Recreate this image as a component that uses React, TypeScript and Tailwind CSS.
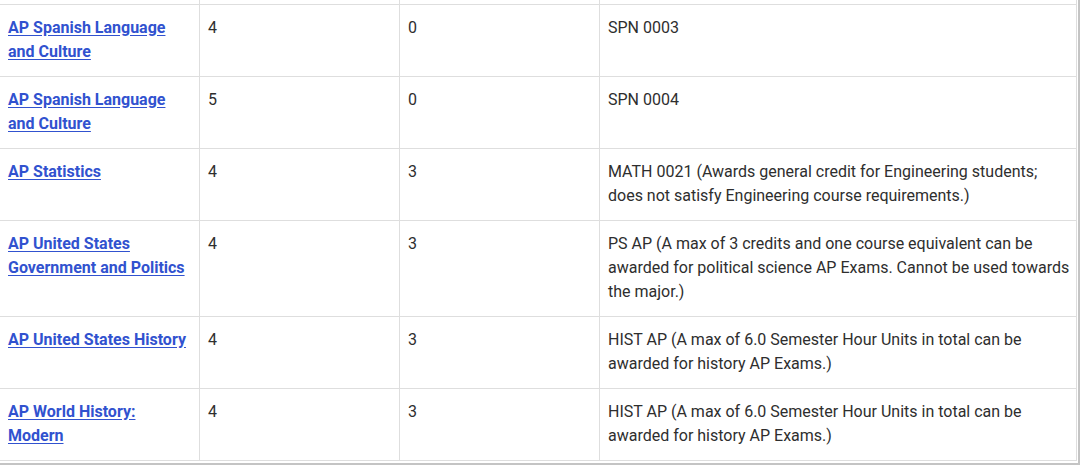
const rows = [
  {
    exam: 'AP Spanish Language and Culture',
    score: '4',
    credits: '0',
    equiv: 'SPN 0003',
  },
  {
    exam: 'AP Spanish Language and Culture',
    score: '5',
    credits: '0',
    equiv: 'SPN 0004',
  },
  {
    exam: 'AP Statistics',
    score: '4',
    credits: '3',
    equiv:
      'MATH 0021 (Awards general credit for Engineering students; does not satisfy Engineering course requirements.)',
  },
  {
    exam: 'AP United States Government and Politics',
    score: '4',
    credits: '3',
    equiv:
      'PS AP (A max of 3 credits and one course equivalent can be awarded for political science AP Exams. Cannot be used towards the major.)',
  },
  {
    exam: 'AP United States History',
    score: '4',
    credits: '3',
    equiv: 'HIST AP (A max of 6.0 Semester Hour Units in total can be awarded for history AP Exams.)',
  },
  {
    exam: 'AP World History: Modern',
    score: '4',
    credits: '3',
    equiv: 'HIST AP (A max of 6.0 Semester Hour Units in total can be awarded for history AP Exams.)',
  },
];

const cell = 'border border-[#dedede] pl-[8px] pr-[8px] pt-[11px] pb-[12px] align-top';
const lastCell = 'border border-[#dedede] pl-[8px] pr-[2px] pt-[11px] pb-[12px] align-top';

export default function App() {
  return (
    <div className="w-[1080px] h-[465px] overflow-hidden bg-white font-['Roboto',sans-serif] text-[16px] leading-[24px] text-[#2e2e2e]">
      <div className="w-[1080px] border-r-2 border-b-2 border-[#c4c4c4] pr-px pb-[2px]">
        <table className="-ml-px w-[1078px] table-fixed border-collapse">
          <colgroup>
            <col className="w-[200px]" />
            <col className="w-[200px]" />
            <col className="w-[200px]" />
            <col />
          </colgroup>
          <tbody>
            {/* tail of the row above, cut off by the viewport */}
            <tr>
              <td className="h-[4px] border-x border-b border-[#dedede] p-0" />
              <td className="h-[4px] border-x border-b border-[#dedede] p-0" />
              <td className="h-[4px] border-x border-b border-[#dedede] p-0" />
              <td className="h-[4px] border-x border-b border-[#dedede] p-0" />
            </tr>
            {rows.map((r, i) => (
              <tr key={i}>
                <td className={cell}>
                  <a href="#" className="font-bold text-[#3152cf] underline underline-offset-2">
                    {r.exam}
                  </a>
                </td>
                <td className={cell}>{r.score}</td>
                <td className={cell}>{r.credits}</td>
                <td className={lastCell}>{r.equiv}</td>
              </tr>
            ))}
          </tbody>
        </table>
      </div>
    </div>
  );
}
